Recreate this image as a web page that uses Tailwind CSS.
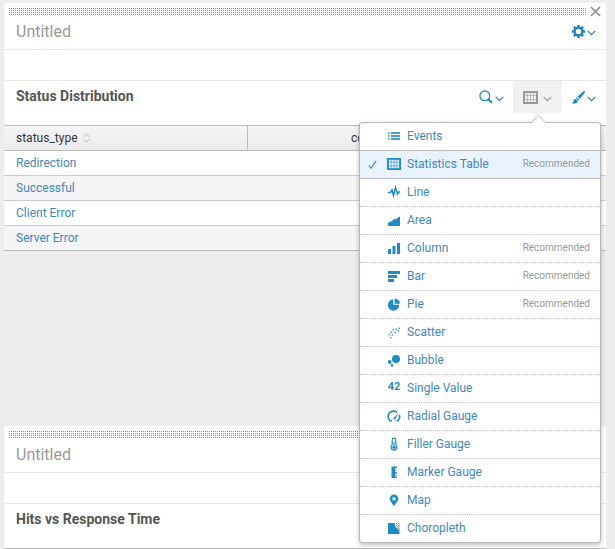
<!DOCTYPE html>
<html lang="en">
<head>
<meta charset="utf-8">
<title>Dashboard</title>
<script src="https://cdn.jsdelivr.net/npm/@tailwindcss/browser@4"></script>
</head>
<body class="h-screen overflow-hidden bg-[#eeecef] pt-[3px] pr-[9px] pl-1 font-[Roboto,'Liberation_Sans',sans-serif] text-xs text-[#333]">
<svg class="hidden" aria-hidden="true">
  <symbol id="chevron" viewBox="0 0 9 6"><path d="M.7.8 4.5 4.7 8.3.8" fill="none" stroke="currentColor" stroke-width="1.2"/></symbol>
  <symbol id="table" viewBox="0 0 15 13"><path d="M1 1h13v11H1z" fill="none" stroke="currentColor" stroke-width="2"/><path d="M4.500 2v9M7.500 2v9M10.500 2v9M2 4.500h11M2 8.500h11" fill="none" stroke="currentColor" stroke-opacity=".6"/></symbol>
</svg>

<section class="flex h-[423px] flex-col">
  <div class="bg-white">
    <header class="h-[47px] border-b border-[#e8e8e8] pt-[5px]">
      <div class="flex h-[7px] items-center pl-[5px]">
        <div class="h-[7px] flex-1 bg-[image:conic-gradient(#888_90deg,transparent_0)] bg-[size:2px_2px] bg-[position:-1px_0px]"></div>
        <button class="mr-[5px] ml-1 text-[#8d8f96]" aria-label="Close"><svg class="size-[11px]" viewBox="0 0 11 11"><path d="m1 1 9 9M10 1l-9 9" stroke="currentColor" stroke-width="1.7"/></svg></button>
      </div>
      <div class="flex h-[34px] items-center justify-between pr-[10px] pl-3">
        <h2 class="text-base text-[#999]">Untitled</h2>
        <button class="flex items-center gap-[2px] pb-[2px] text-[#1e83bd]" aria-label="Edit panel">
          <svg class="size-[13px]" viewBox="0 0 13 13" fill="none" stroke="currentColor"><circle cx="6.5" cy="6.5" r="3.9" stroke-width="2.3"/><path d="M6.500 0v2M6.500 11v2M0 6.500h2M11 6.500h2M1.900 1.900l1.400 1.400M9.700 9.700l1.400 1.400M1.900 11.100l1.400-1.400M9.700 3.300l1.400-1.400" stroke-width="2.5"/></svg>
          <svg class="mt-1 h-[6px] w-[9px]"><use href="#chevron"/></svg>
        </button>
      </div>
    </header>
    <div class="h-[31px] border-b border-[#e8e8e8]"></div>
    <div class="flex h-11 justify-between pl-3">
      <h3 class="pt-[5px] text-sm leading-5 font-bold text-[#555]">Status Distribution</h3>
      <div class="flex h-8">
        <button class="flex w-11 items-center gap-[2px] pl-[10px] text-[#1e83bd]" aria-label="Search">
          <svg class="size-[14px]" viewBox="0 0 14 14" fill="none" stroke="currentColor"><circle cx="5.8" cy="5.8" r="4.9" stroke-width="1.2"/><path d="m9.300 9.300 3.700 3.500" stroke-width="2"/></svg>
          <svg class="mt-1 h-[6px] w-[9px]"><use href="#chevron"/></svg>
        </button>
        <div class="relative">
          <button class="flex h-8 w-[49px] items-center justify-center gap-[5px] bg-[#f2f0f3] text-[#999]" aria-label="Visualization" aria-expanded="true">
            <svg class="h-[13px] w-[15px]"><use href="#table"/></svg>
            <svg class="mt-1 h-[6px] w-[9px]"><use href="#chevron"/></svg>
          </button>
          <div class="absolute top-[41px] -right-[39px] z-10 w-[242px] rounded-[3px] border border-[#b8b8bc] bg-white shadow-[0_2px_5px_rgba(0,0,0,0.25)]">
            <svg class="absolute -top-2 left-[171px] h-[8px] w-[15px]" viewBox="0 0 15 8"><path d="M0 8 7.500.7 15 8" fill="#fff" stroke="#bbb"/></svg>
            <ul class="text-[#3f88b8] [&_button]:flex [&_button]:h-full [&_button]:w-full [&_button]:items-center [&_button]:pl-[27px] [&_button]:pr-[10px] [&_button]:pb-[2px] [&_li]:h-7 [&_li]:border-b [&_li]:border-dotted [&_li]:border-[#bbb] [&_span]:ml-[6px] [&_small]:ml-auto [&_small]:text-[10px] [&_small]:text-[#999] [&_svg.icon]:size-[14px] [&_svg.icon]:text-[#1e8bc3]">
              <li class="border-solid! border-[#bbb]!"><button><svg class="icon" viewBox="0 0 14 14"><path d="M1 3h1.500v2H1zM1 6h1.500v2H1zM1 9h1.500v2H1zM4 3h9v2H4zM4 6h9v2H4zM4 9h9v2H4z" fill="currentColor" fill-opacity=".8"/></svg><span>Events</span></button></li>
              <li class="relative border-solid! border-[#bbb]! bg-[#e8f3fd]"><svg class="absolute top-[9px] left-2 size-[9px]" viewBox="0 0 10 10"><path d="m.8 6 2.700 3L9 1" fill="none" stroke="currentColor" stroke-width="1.300"/></svg><button><svg class="icon"><use href="#table"/></svg><span>Statistics Table</span><small>Recommended</small></button></li>
              <li><button><svg class="icon" viewBox="0 0 14 14"><path d="M1 7.500h2.500L5 5l1.500 5.500 2-8L10.500 9l1.200-2H13" fill="none" stroke="currentColor" stroke-width="1.500"/></svg><span>Line</span></button></li>
              <li><button><svg class="icon" viewBox="0 0 14 14"><path d="M1 13v-3l2-1.500h1.500L7 6l1.500.5 2.500-2 2-1V13z" fill="currentColor"/></svg><span>Area</span></button></li>
              <li><button><svg class="icon" viewBox="0 0 14 14"><path d="M1 8h3v5H1zM5.500 5h3v8h-3zM10 2h3v11h-3z" fill="currentColor"/></svg><span>Column</span><small>Recommended</small></button></li>
              <li><button><svg class="icon" viewBox="0 0 14 14"><path d="M1 2h12v3H1zM1 6h9v3H1zM1 10h6v3H1z" fill="currentColor"/></svg><span>Bar</span><small>Recommended</small></button></li>
              <li><button><svg class="icon" viewBox="0 0 14 14"><path d="M6.300 2.300v5.400h5.900A5.700 5.700 0 1 1 6.300 2.300z" fill="currentColor"/><path d="M7.600 1.400A5.300 5.300 0 0 1 12.900 6.700H7.600z" fill="currentColor"/></svg><span>Pie</span><small>Recommended</small></button></li>
              <li><button><svg class="icon" viewBox="0 0 14 14"><path d="M1.500 9H3v1.500H1.500zM3 12h1.500v1.500H3zM3.500 6.500H5V8H3.500zM4.500 9.500H6V11H4.500zM5.500 4H7v1.500H5.500zM7.500 6.500H9V8H7.500zM8.500 3.500H10V5H8.500zM10.500 5H12v1.500h-1.500zM11.500 2.500H13V4h-1.500z" fill="currentColor" fill-opacity=".8"/></svg><span>Scatter</span></button></li>
              <li><button><svg class="icon" viewBox="0 0 14 14" fill="currentColor"><circle cx="9" cy="6" r="4"/><circle cx="2.700" cy="9" r="1.900"/><circle cx="5" cy="12.400" r="1.300"/></svg><span>Bubble</span></button></li>
              <li><button><b class="w-[14px] text-center text-[11px] text-[#2e87b8]">42</b><span>Single Value</span></button></li>
              <li><button><svg class="icon" viewBox="0 0 14 14"><path d="M5 11.700H3A5.300 5.300 0 0 1 10 3.400M12.200 5.900A5.300 5.300 0 0 1 11 11.700H9.500" fill="none" stroke="currentColor" stroke-width="1.600"/><path d="M6 9.800 11.500 4 8 10.800z" fill="currentColor"/></svg><span>Radial Gauge</span></button></li>
              <li><button><svg class="icon" viewBox="0 0 14 14"><path d="M5.200 8V3a1.800 1.800 0 0 1 3.600 0v5a2.900 2.900 0 1 1-3.600 0z" fill="none" stroke="currentColor" stroke-width="1.200"/><path d="M6.500 5h1v4h-1z" fill="currentColor"/><circle cx="7" cy="10.300" r="1.600" fill="currentColor"/></svg><span>Filler Gauge</span></button></li>
              <li><button><svg class="icon" viewBox="0 0 14 14"><path d="M4.500 1.500H10V3H8v1.500h1.500v1H8V7h2v1.500H8V10h1.500v1H8v.8h2V13H4.500z" fill="currentColor"/></svg><span>Marker Gauge</span></button></li>
              <li><button><svg class="icon" viewBox="0 0 14 14"><path d="M7 1.500a4.300 4.300 0 0 1 4.300 4.300C11.300 8.500 8.500 10 7 13.500 5.500 10 2.700 8.500 2.700 5.800A4.300 4.300 0 0 1 7 1.500zM7 4a1.700 1.700 0 1 0 0 3.400A1.700 1.700 0 0 0 7 4z" fill="currentColor" fill-rule="evenodd"/></svg><span>Map</span></button></li>
              <li class="h-[27px]! border-b-0!"><button><svg class="icon" viewBox="0 0 14 14"><path d="M1 2h6.500l1 3.500 1.500 2 2 2V13H1z" fill="currentColor"/><path d="M9 2h1v1H9zM11 2h1v1h-1zM10 3h1v1h-1zM12 3h1v1h-1zM9 4h1v1H9zM11 4h1v1h-1zM10 5h1v1h-1zM12 5h1v1h-1zM11 6h1v1h-1zM10 7h1v1h-1zM12 7h1v1h-1zM11 8h1v1h-1zM12 9h1v1h-1zM12 11h1v1h-1z" fill="currentColor" fill-opacity=".7"/></svg><span>Choropleth</span></button></li>
            </ul>
          </div>
        </div>
        <button class="flex w-11 items-center gap-[2px] pl-[10px] text-[#1e83bd]" aria-label="Format">
          <svg class="size-[13px]" viewBox="0 0 13 13" fill="currentColor"><path d="M12.800.2c.5.5-.2 1.500-1 2.700L8 7.800 5.600 5.600 10.600 1.200C11.500.4 12.400-.2 12.800.2zM5 6.200l2.400 2.200-1 1.200L4 7.400zM3.600 8l2.200 2C5.500 12 3 13 0 12.400 1.800 11.500 1.200 8.500 3.600 8z"/></svg>
          <svg class="mt-1 h-[6px] w-[9px]"><use href="#chevron"/></svg>
        </button>
      </div>
    </div>
    <table class="w-full table-fixed border-separate border-spacing-0 text-left [&_td]:h-[25px] [&_td]:border-b [&_td]:border-[#ccc] [&_td]:pl-3 [&_td]:pb-px">
      <thead>
        <tr class="bg-linear-to-b from-[#f7f5f8] to-[#eceaed]">
          <th class="h-[26px] w-[244px] border-y border-r border-[#bbb] pl-3 font-normal"><div class="flex items-center gap-[5px]">status_type<svg class="h-[10px] w-[7px]" viewBox="0 0 7 10"><path d="M.8 3.700 3.500 1l2.700 2.700M.8 6.300 3.500 9l2.700-2.700" fill="none" stroke="#aaa"/></svg></div></th>
          <th class="border-y border-[#bbb] pl-[103px] font-normal">count</th>
        </tr>
      </thead>
      <tbody>
        <tr><td><a href="#" class="text-[#3f88b8]">Redirection</a></td><td></td></tr>
        <tr class="bg-[#f5f4f6]"><td><a href="#" class="text-[#3f88b8]">Successful</a></td><td></td></tr>
        <tr><td><a href="#" class="text-[#3f88b8]">Client Error</a></td><td></td></tr>
        <tr class="bg-[#f5f4f6]"><td class="border-[#bbb]!"><a href="#" class="text-[#3f88b8]">Server Error</a></td><td class="border-[#bbb]!"></td></tr>
      </tbody>
    </table>
  </div>
</section>

<section class="bg-white">
  <header class="h-[47px] border-b border-[#e8e8e8] pt-[5px]">
    <div class="mr-5 ml-[5px] h-[7px] bg-[image:conic-gradient(#888_90deg,transparent_0)] bg-[size:2px_2px] bg-[position:-1px_0px]"></div>
    <div class="flex h-[34px] items-center px-3"><h2 class="text-base text-[#999]">Untitled</h2></div>
  </header>
  <div class="h-[31px] border-b border-[#e8e8e8]"></div>
  <div class="h-[45px] border-b border-[#bbb] pt-[5px] pl-3"><h3 class="text-sm leading-5 font-bold text-[#555]">Hits vs Response Time</h3></div>
</section>
</body>
</html>
